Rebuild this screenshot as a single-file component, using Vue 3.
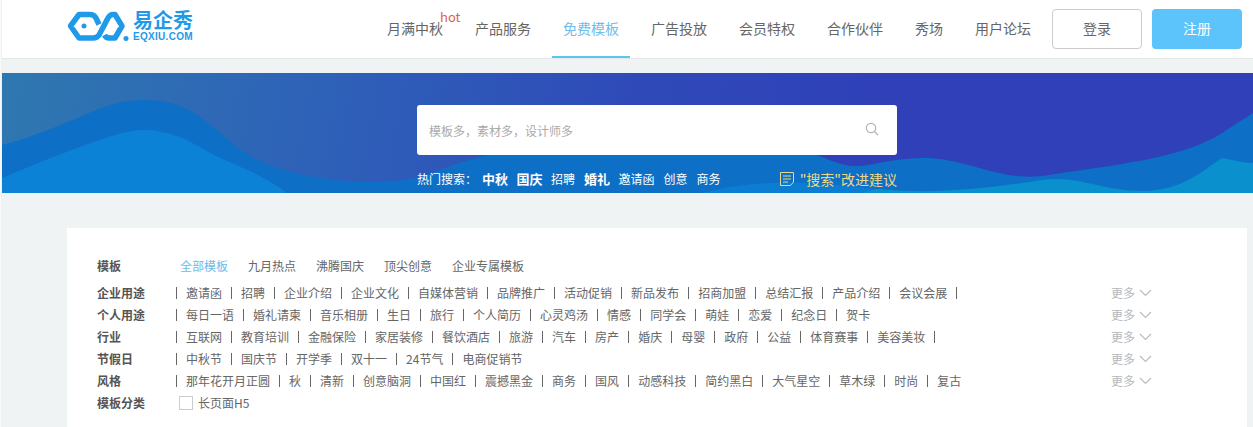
<script setup>
const navItems = [
  { label: '月满中秋', hot: true },
  { label: '产品服务' },
  { label: '免费模板', active: true },
  { label: '广告投放' },
  { label: '会员特权' },
  { label: '合作伙伴' },
  { label: '秀场' },
  { label: '用户论坛' }
];

const hotWords = [
  { text: '中秋', bold: true },
  { text: '国庆', bold: true },
  { text: '招聘' },
  { text: '婚礼', bold: true },
  { text: '邀请函' },
  { text: '创意' },
  { text: '商务' }
];

const tabs = ['全部模板', '九月热点', '沸腾国庆', '顶尖创意', '企业专属模板'];

const filters = [
  {
    label: '企业用途',
    tail: true,
    items: ['邀请函', '招聘', '企业介绍', '企业文化', '自媒体营销', '品牌推广', '活动促销', '新品发布', '招商加盟', '总结汇报', '产品介绍', '会议会展']
  },
  {
    label: '个人用途',
    items: ['每日一语', '婚礼请柬', '音乐相册', '生日', '旅行', '个人简历', '心灵鸡汤', '情感', '同学会', '萌娃', '恋爱', '纪念日', '贺卡']
  },
  {
    label: '行业',
    tail: true,
    items: ['互联网', '教育培训', '金融保险', '家居装修', '餐饮酒店', '旅游', '汽车', '房产', '婚庆', '母婴', '政府', '公益', '体育赛事', '美容美妆']
  },
  {
    label: '节假日',
    items: ['中秋节', '国庆节', '开学季', '双十一', '24节气', '电商促销节']
  },
  {
    label: '风格',
    items: ['那年花开月正圆', '秋', '清新', '创意脑洞', '中国红', '震撼黑金', '商务', '国风', '动感科技', '简约黑白', '大气星空', '草木绿', '时尚', '复古']
  }
];
</script>

<template>
  <div class="page">
    <header class="header">
      <a class="logo">
        <svg class="logo-mark" width="62" height="31" viewBox="0 0 62 31">
          <path d="M32 13.500L29 7Q27 3.500 23 3.500H12L3.500 15L12 27H26Q30 27 32 24L41 7Q43 3.500 46 3.500H48L55 15L48 27H42Q39 27 37.500 24" fill="none" stroke="#1f9ae8" stroke-width="5.500" stroke-linejoin="round" />
          <circle cx="17" cy="15" r="2.500" fill="#1f9ae8" />
          <circle cx="59" cy="27.500" r="2.500" fill="#1f9ae8" />
        </svg>
        <span class="logo-text">
          <b class="logo-cn">易企秀</b>
          <b class="logo-en">EQXIU.COM</b>
        </span>
      </a>
      <nav class="nav">
        <a v-for="item in navItems" :key="item.label" class="nav-item" :class="{ active: item.active }">
          {{ item.label }}
          <span v-if="item.hot" class="hot">hot</span>
        </a>
      </nav>
      <button class="btn btn-login">登录</button>
      <button class="btn btn-register">注册</button>
    </header>

    <section class="banner">
      <svg class="waves" viewBox="0 0 1251 120" preserveAspectRatio="none">
        <path d="M0 72C40 62 80 42 105 33C130 24 170 24 195 42C225 62 235 82 275 95C320 110 390 115 430 100C470 85 500 75 560 72L760 70C810 72 830 95 858 93C880 90 900 84 928 85C970 88 1000 108 1040 103C1110 92 1180 86 1220 60C1235 50 1245 44 1251 40V120H0Z" fill="#0e6fc6" />
        <path d="M0 105C40 88 85 70 120 60C150 52 175 60 205 78C225 90 260 100 285 120H0Z" fill="#0b82d6" />
        <path d="M700 120C770 102 830 112 875 116C900 118 905 120 905 120Z" fill="#0b7dd2" />
        <path d="M875 116C930 122 990 115 1040 107C1075 102 1100 118 1140 118C1180 118 1200 98 1220 85C1235 88 1245 90 1251 90V120H860Z" fill="#0a90cc" />
      </svg>
      <div class="search-area">
        <div class="search-box">
          <span class="placeholder">模板多，素材多，设计师多</span>
          <svg class="search-icon" width="14" height="14" viewBox="0 0 14 14">
            <circle cx="6" cy="6" r="4.700" fill="none" stroke="#b5b5b5" stroke-width="1.200" />
            <path d="M9.500 9.500L13 13" stroke="#b5b5b5" stroke-width="1.200" fill="none" />
          </svg>
        </div>
        <div class="hot-row">
          <span class="hot-title">热门搜索：</span>
          <a v-for="word in hotWords" :key="word.text" class="hot-word" :class="{ bold: word.bold }">{{ word.text }}</a>
          <a class="feedback">
            <svg width="16" height="16" viewBox="0 0 16 16" fill="none" stroke="#e6d98c" stroke-width="1">
              <path d="M1.500 1.500h13v9.500l-3 3.500h-10z" />
              <path d="M4 5h8M4 8h8M4 11h5" />
            </svg>
            "搜索"改进建议
          </a>
        </div>
      </div>
    </section>

    <main class="card">
      <div class="tab-row">
        <span class="row-label tab-label">模板</span>
        <a v-for="(tab, i) in tabs" :key="tab" class="tab" :class="{ active: i === 0 }">{{ tab }}</a>
      </div>
      <div v-for="group in filters" :key="group.label" class="filter-row">
        <span class="row-label">{{ group.label }}</span>
        <div class="filter-list">
          <template v-for="item in group.items" :key="item">
            <i class="sep"></i>
            <a class="filter-item">{{ item }}</a>
          </template>
          <i v-if="group.tail" class="sep"></i>
        </div>
        <a class="more">
          更多
          <svg width="13" height="8" viewBox="0 0 13 8" fill="none" stroke="#b9bdc1" stroke-width="1.200">
            <path d="M1 1l5.500 5.500L12 1" />
          </svg>
        </a>
      </div>
      <div class="filter-row">
        <span class="row-label check-label">模板分类</span>
        <label class="check">
          <i class="check-box"></i>
          长页面H5
        </label>
      </div>
    </main>
  </div>
</template>

<style scoped>
.page {
  display: flex;
  flex-direction: column;
  height: 427px;
  overflow: hidden;
  margin-left: 1px;
  padding-left: 1px;
  background: #eff3f4;
  font-family: "Noto Sans CJK SC", "Noto Sans", sans-serif;
  font-size: 12px;
  color: #666;
  box-sizing: border-box;
}

.header {
  display: flex;
  align-items: center;
  flex: none;
  gap: 10px;
  height: 58px;
  padding: 0 11px 0 65px;
  background: #fff;
  box-shadow: 0 1px 0 #e6e9ea;
  box-sizing: border-box;
}

.logo {
  display: flex;
  align-items: center;
  margin-top: -6px;
}

.logo-mark {
  display: block;
  margin-right: 4px;
}

.logo-text {
  display: flex;
  flex-direction: column;
  color: #1f9ae8;
}

.logo-cn {
  font-size: 20px;
  line-height: 17px;
  font-weight: 700;
}

.logo-en {
  margin-top: 4px;
  font-family: "Liberation Sans", Arial, sans-serif;
  font-size: 10px;
  line-height: 10px;
  letter-spacing: 0.300px;
  font-weight: 700;
}

.nav {
  display: flex;
  gap: 10px;
  margin-left: auto;
}

.nav-item {
  position: relative;
  padding: 0 11px;
  height: 58px;
  line-height: 56px;
  font-size: 14px;
  color: #666;
  box-sizing: border-box;
}

.nav-item.active {
  color: #70bdea;
  border-bottom: 2px solid #5ec5ef;
}

.hot {
  position: absolute;
  top: 8px;
  left: 64px;
  font-size: 13px;
  line-height: 17px;
  color: #e0604c;
}

.btn {
  width: 90px;
  height: 40px;
  padding: 0 0 2px;
  border-radius: 4px;
  font-family: inherit;
  font-size: 14px;
  box-sizing: border-box;
}

.btn-login {
  background: #fff;
  border: 1px solid #ccc;
  color: #666;
}

.btn-register {
  background: #5cc4fb;
  border: none;
  color: #fff;
}

.banner {
  position: relative;
  flex: none;
  height: 120px;
  margin-top: 15px;
  background: linear-gradient(100deg, #2e78b0 0%, #2e62b8 25%, #2f4ab8 50%, #2f40b8 70%, #2f40b8 100%);
  overflow: hidden;
}

.waves {
  position: absolute;
  inset: 0;
  width: 100%;
  height: 100%;
}

.search-area {
  position: relative;
  width: 480px;
  padding-top: 32px;
  margin-left: 415px;
}

.search-box {
  display: flex;
  align-items: center;
  justify-content: space-between;
  height: 50px;
  padding: 0 18px 0 12px;
  background: #fff;
  border-radius: 3px;
  box-sizing: border-box;
}

.placeholder {
  color: #aaa;
}

.search-icon {
  margin-top: -2px;
}

.hot-row {
  display: flex;
  align-items: center;
  height: 18px;
  margin-top: 15px;
  color: #fff;
  line-height: 18px;
}

.hot-title {
  width: 65px;
  flex: none;
}

.hot-word {
  margin-right: 9px;
}

.hot-word.bold {
  margin-right: 8.500px;
  font-size: 13px;
  font-weight: 700;
}

.feedback {
  display: flex;
  align-items: center;
  gap: 5px;
  margin-left: auto;
  font-size: 14px;
  color: #ecd884;
}

.card {
  flex: 1;
  margin: 35px 6px 0 65px;
  padding: 27px 95px 0 30px;
  background: #fff;
}

.tab-row {
  display: flex;
  height: 22px;
  line-height: 22px;
  margin-bottom: 5px;
}

.tab-label {
  width: 83px;
}

.tab {
  margin-right: 20px;
}

.tab.active {
  color: #6bbcec;
}

.filter-row {
  display: flex;
  align-items: center;
  height: 22px;
  line-height: 22px;
}

.row-label {
  flex: none;
  font-weight: 700;
  color: #555;
}

.filter-row > .row-label {
  width: 79px;
}

.filter-list {
  display: flex;
  align-items: center;
  flex: 1;
}

.sep {
  flex: none;
  width: 1px;
  height: 12px;
  margin: 0 9px 0 0;
  background: #666;
}

.filter-item {
  flex: none;
  margin-right: 9px;
}

.more {
  display: flex;
  align-items: center;
  gap: 4px;
  flex: none;
  color: #b4b8bc;
}

.check {
  display: flex;
  align-items: center;
  gap: 5px;
  margin-left: 3px;
}

.check-box {
  width: 14px;
  height: 14px;
  border: 1px solid #ccc;
  box-sizing: border-box;
}
</style>

<style>
body {
  background: #f8f8f8;
}
</style>
